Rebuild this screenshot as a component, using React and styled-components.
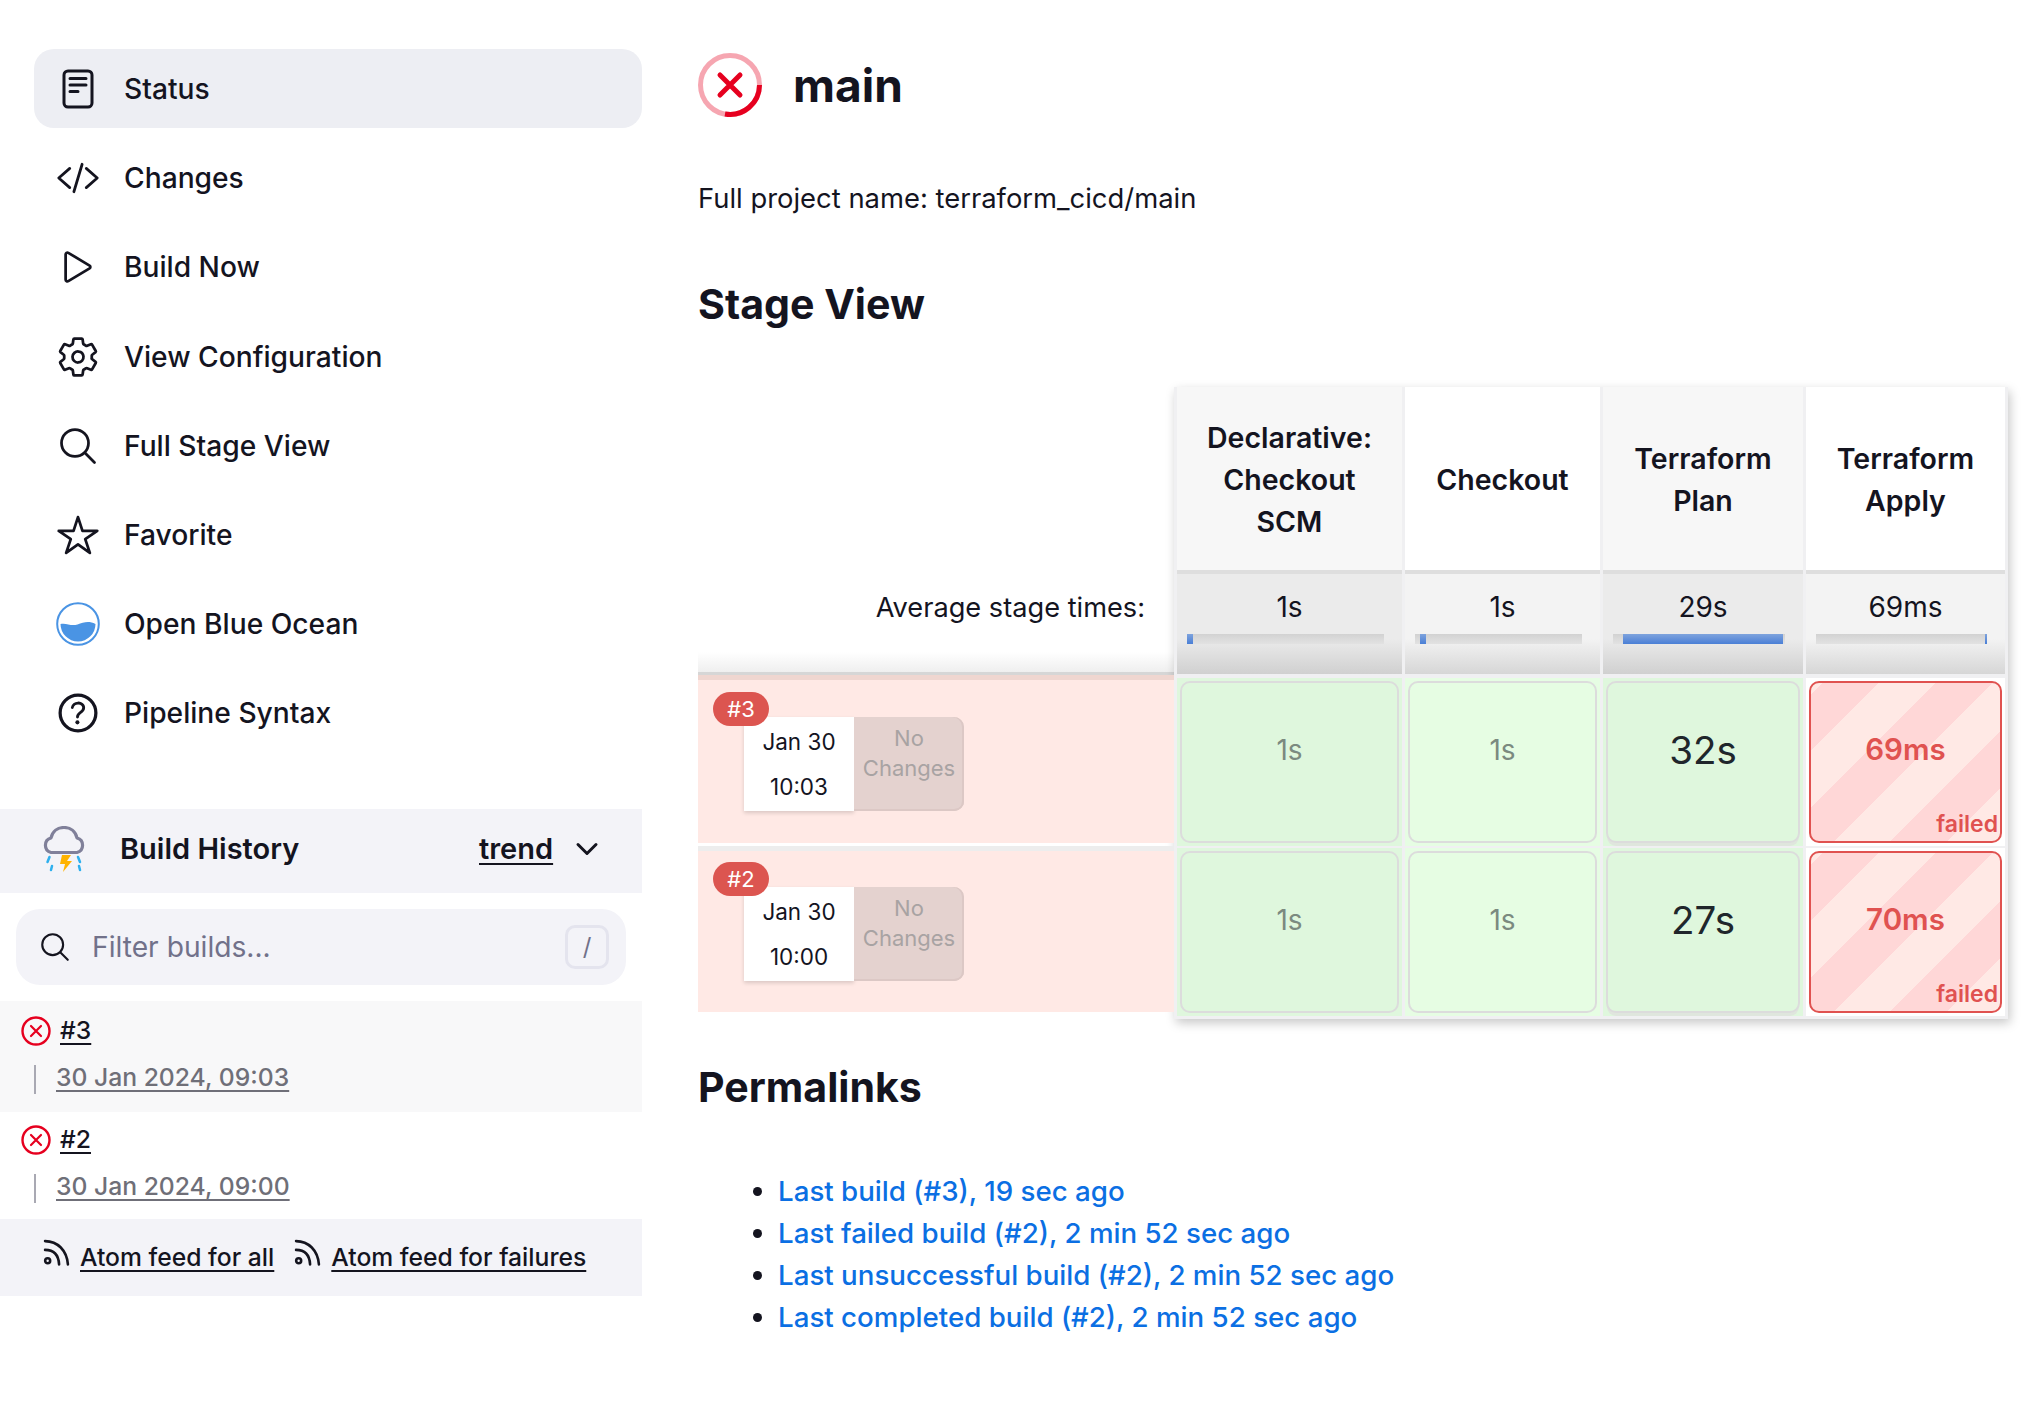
import React from 'react';
import styled, { createGlobalStyle } from 'styled-components';
import {
  IoCodeSlashOutline,
  IoPlayOutline,
  IoSettingsOutline,
  IoSearchOutline,
  IoStarOutline,
  IoHelpCircleOutline,
  IoChevronDownOutline
} from 'react-icons/io5';

const GlobalStyle = createGlobalStyle`
  html, body {
    margin: 0;
    padding: 0;
    background: #fff;
    color: #14141f;
    font-family: Inter, "Liberation Sans", sans-serif;
  }
`;

const Page = styled.div`
  display: flex;
  width: 2044px;
  height: 1407px;
  overflow: hidden;
`;

const Sidebar = styled.aside`
  width: 642px;
  flex: none;
  padding-top: 49px;
`;

const Nav = styled.nav`
  display: flex;
  flex-direction: column;
  gap: 10.2px;
  margin-left: 34px;
`;

const NavItem = styled.a`
  display: flex;
  align-items: center;
  height: 79px;
  box-sizing: border-box;
  padding-top: ${props => props.$active ? 0 : 1}px;
  border-radius: 20px;
  background: ${props => props.$active ? '#edeef3' : 'transparent'};
  font-size: 28.2px;
  font-weight: 500;
`;

const NavIcon = styled.span`
  display: flex;
  align-items: center;
  justify-content: center;
  width: 44px;
  margin: 0 24px 0 22px;
  font-size: ${props => props.$size || 44}px;

  svg {
    flex: none;
  }
`;

const HistoryHeader = styled.div`
  display: flex;
  align-items: center;
  height: 84px;
  box-sizing: border-box;
  margin-top: 56.6px;
  padding: 0 0 4px 41px;
  background: #f3f3f8;
  font-size: 29px;
  font-weight: 600;
`;

const HistoryTitle = styled.span`
  margin-left: 33px;
  width: 359px;
`;

const Underlined = styled.a`
  color: ${props => props.$color || 'inherit'};
  text-decoration: underline;
  text-decoration-thickness: 2px;
  text-underline-offset: 4px;
`;

const TrendChevron = styled.span`
  display: flex;
  margin-left: 18px;
  font-size: 32px;
`;

const FilterBox = styled.div`
  display: flex;
  align-items: center;
  height: 76px;
  margin: 16px;
  padding: 0 17px 0 22px;
  border-radius: 24px;
  background: #f3f3f8;
  font-size: 28.2px;
  color: #71718a;
`;

const FilterSearch = styled.span`
  display: flex;
  font-size: 34px;
  color: #14141f;
  margin-right: 20px;
`;

const FilterText = styled.span`
  flex: 1;
`;

const SlashKey = styled.span`
  display: flex;
  align-items: center;
  justify-content: center;
  width: 44px;
  height: 44px;
  box-sizing: border-box;
  border: 3px solid #e4e4ee;
  border-radius: 10px;
  font-size: 24px;
`;

const BuildRow = styled.div`
  height: ${props => props.$striped ? '111px' : '107px'};
  padding-top: ${props => props.$striped ? '15px' : '13px'};
  box-sizing: border-box;
  background: ${props => props.$striped ? '#f8f8f9' : '#fff'};
`;

const BuildTop = styled.div`
  display: flex;
  align-items: center;
  height: 30px;
  padding-left: 21px;
  font-size: 24.7px;
  font-weight: 500;
`;

const BuildNumber = styled.span`
  margin: 0 0 2px 9px;
`;

const BuildDate = styled.div`
  display: flex;
  align-items: center;
  margin: 19px 0 0 34px;
  height: 25px;
  border-left: 2px solid #a9a9b3;
  padding: 0 0 4px 20px;
  font-size: 24.7px;
  font-weight: 500;
`;

const FeedBar = styled.div`
  display: flex;
  align-items: flex-start;
  height: 77px;
  box-sizing: border-box;
  padding: 20px 0 0 43px;
  background: #f3f3f8;
  font-size: 24.7px;
  font-weight: 500;
`;

const FeedLink = styled.div`
  display: flex;
  margin-right: 20px;
`;

const FeedLabel = styled.span`
  margin: 3px 0 0 10px;
`;

const Main = styled.main`
  flex: 1;
  padding: 53px 0 0 56px;
`;

const TitleRow = styled.div`
  display: flex;
  align-items: center;
  height: 63px;
`;

const Title = styled.h1`
  margin: 0 0 0 31px;
  font-size: 46px;
  font-weight: 700;
`;

const ProjectName = styled.p`
  margin: 62px 0 0;
  height: 40px;
  line-height: 40px;
  font-size: 27.4px;
`;

const SectionTitle = styled.h2`
  margin: ${props => props.$top} 0 0;
  height: 54px;
  line-height: 54px;
  font-size: 41.1px;
  font-weight: 700;
`;

const StageView = styled.div`
  display: flex;
  margin-top: 56px;
`;

const RowLabels = styled.div`
  width: 476px;
  flex: none;
`;

const AverageLabel = styled.div`
  height: 288px;
  box-sizing: border-box;
  padding: 201px 29px 0 0;
  line-height: 40px;
  text-align: right;
  font-size: 27.2px;
  background: linear-gradient(#fff 265px, #efefef 285px, #d6d6d6 285px);
`;

const RunRow = styled.div`
  position: relative;
  display: flex;
  height: ${props => props.$height}px;
  box-sizing: border-box;
  padding: ${props => props.$pad}px 0 0 46px;
  margin-bottom: 3px;
  border-top: 5px solid ${props => props.$edge};
  background: #ffe9e5;
`;

const Badge = styled.span`
  position: absolute;
  top: ${props => props.$top}px;
  left: 15px;
  width: 56px;
  height: 34px;
  line-height: 34px;
  border-radius: 17px;
  background: #dc5550;
  color: #fff;
  text-align: center;
  font-size: 22px;
`;

const DateBox = styled.div`
  width: 110px;
  height: 94px;
  box-sizing: border-box;
  padding-top: 2px;
  background: #fff;
  box-shadow: 0 2px 4px rgba(0, 0, 0, 0.15);
  text-align: center;
  font-size: 22.5px;
  line-height: 45px;
`;

const NoChanges = styled.div`
  width: 110px;
  height: 94px;
  box-sizing: border-box;
  padding-top: 6px;
  border-radius: 0 10px 10px 0;
  background: #e4d2cf;
  box-shadow: inset 0 -2px 0 #dcc8c5, inset -2px 0 0 #dcc8c5;
  text-align: center;
  font-size: 22px;
  line-height: 30px;
  color: #a8a3a3;
`;

const StageGrid = styled.div`
  display: grid;
  grid-template-columns: 225px 195px 200px 199px;
  grid-template-rows: 187px 100px 172px 170px;
  column-gap: 3px;
  width: 834px;
  height: 632px;
  box-sizing: border-box;
  padding: 0 3px;
  background: #f0f0f2;
  box-shadow: 2px 4px 10px rgba(0, 0, 0, 0.22);
`;

const HeadCell = styled.div`
  display: flex;
  align-items: center;
  justify-content: center;
  box-sizing: border-box;
  padding-top: 2px;
  border-bottom: 4px solid #dedede;
  background: ${props => props.$alt ? '#f7f7f7' : '#fff'};
  text-align: center;
  font-size: 28.5px;
  font-weight: 600;
  line-height: 42px;
`;

const AverageCell = styled.div`
  padding: 13px 10px 0;
  background: ${props => props.$alt
    ? 'linear-gradient(#ebebeb 65%, #d0d0d0 100%)'
    : 'linear-gradient(#f3f3f3 65%, #d6d6d6 100%)'};
  text-align: center;
  font-size: 28px;
  line-height: 40px;
`;

const Bar = styled.div`
  position: relative;
  height: 10px;
  margin: 7px 8px 0 0;
  background: linear-gradient(#d2d2d2, #e2e2e2);
`;

const BarFill = styled.div`
  position: absolute;
  top: 0;
  bottom: 0;
  background: linear-gradient(#7ea3dd, #4a7fd6);
`;

const BodyCell = styled.div`
  margin-top: ${props => props.$gap}px;
  padding: 3px;
  background: ${props => props.$fail ? '#fff' : props.$alt ? '#dff7dd' : '#e6fde3'};
`;

const FAILED_STRIPES = 'repeating-linear-gradient(135deg, #ffe9e5 0, #ffe9e5 8px, #ffd7d7 8px, #ffd7d7 48px, #ffe9e5 48px, #ffe9e5 80px)';

const Tile = styled.div`
  position: relative;
  height: 162px;
  box-sizing: border-box;
  padding-top: ${props => props.$fail ? 46 : 47}px;
  border: 2px solid ${props => props.$fail ? '#e05250' : '#dcdcdc'};
  border-radius: 10px;
  background: ${props => props.$fail ? FAILED_STRIPES : props.$alt ? '#dff7dd' : '#e6fde3'};
  box-shadow: ${props => props.$slow ? '0 4px 0 -1px #dfe6dd' : 'none'};
  text-align: center;
  line-height: 40px;
  font-size: ${props => props.$slow ? '38.5px' : props.$fail ? '29.5px' : '28px'};
  font-weight: ${props => props.$fail ? 600 : 400};
  color: ${props => props.$fail ? '#e05250' : props.$slow ? '#20262b' : '#7b8a80'};
`;

const FailedTag = styled.span`
  position: absolute;
  right: 2px;
  bottom: 4px;
  line-height: 26px;
  font-size: 23px;
  font-weight: 600;
`;

const LinkList = styled.ul`
  margin: 56px 0 0;
  padding: 0 0 0 80px;
  font-size: 27.7px;
  font-weight: 500;
  line-height: 42px;
  color: #14141f;
`;

const PermaLink = styled.a`
  color: #0b6fe3;
`;

const FailIcon = ({ size = 30 }) => (
  <svg width={size} height={size} viewBox="0 0 30 30" fill="none" stroke="#e6001f" strokeLinecap="round">
    <circle cx="15" cy="15" r="13.5" strokeWidth="2.4" />
    <path d="M10 10l10 10M20 10l-10 10" strokeWidth="2.2" />
  </svg>
);

const FailBigIcon = () => (
  <svg width="64" height="64" viewBox="0 0 64 64" fill="none" stroke="#e6001f">
    <circle cx="32" cy="32" r="29.5" strokeWidth="5" opacity="0.35" />
    <path d="M61.5 32A29.5 29.5 0 0 1 27 61" strokeWidth="5" />
    <path d="M22 22l20 20M42 22L22 42" strokeWidth="5" strokeLinecap="round" />
  </svg>
);

const StatusIcon = () => (
  <svg width="32" height="40" viewBox="0 0 32 40" fill="none" stroke="#14141f" strokeWidth="3" strokeLinecap="round">
    <rect x="2" y="2" width="28" height="36" rx="4" />
    <path d="M8 9.5h16M8 16h16M8 22.5h8" />
  </svg>
);

const OceanIcon = () => (
  <svg width="44" height="44" viewBox="0 0 44 44">
    <circle cx="22" cy="22" r="20.8" fill="none" stroke="#4a94e4" strokeWidth="2" />
    <path d="M4.5 22c6-1.500 10 2.500 17 .5 6-2 11-4 18-.5a17.500 17.500 0 0 1-35 0z" fill="#4a94e4" />
  </svg>
);

const WeatherIcon = () => (
  <svg width="46" height="46" viewBox="0 0 46 46" fill="none">
    <path d="M10 26.500a7.500 7.500 0 0 1 0-14.500C11.500 5.500 16.500 1.500 23 1.500s11.500 4 13 10.500a7.500 7.500 0 0 1 0 14.500z" stroke="#80809a" strokeWidth="3.200" strokeLinejoin="round" />
    <path d="M21 29h9l-4 6h5l-9 11 2-8h-5z" fill="#ffb300" />
    <path d="M8.500 31l-2 5M11 40l-1 4M37 31l2 5M38 40l1 4" stroke="#2fb0ee" strokeWidth="2.500" strokeLinecap="round" />
  </svg>
);

const RssIcon = () => (
  <svg width="27" height="27" viewBox="0 0 26 26" fill="none" stroke="#14141f" strokeWidth="2.500" strokeLinecap="round">
    <circle cx="4.500" cy="21" r="2.400" />
    <path d="M2 10.500C11 10.500 15 16 15.500 24.500M2 2c12 0 21 9 22 22.500" />
  </svg>
);

const navItems = [
  { label: 'Status', icon: <StatusIcon />, active: true },
  { label: 'Changes', icon: <IoCodeSlashOutline /> },
  { label: 'Build Now', icon: <IoPlayOutline /> },
  { label: 'View Configuration', icon: <IoSettingsOutline /> },
  { label: 'Full Stage View', icon: <IoSearchOutline /> },
  { label: 'Favorite', icon: <IoStarOutline /> },
  { label: 'Open Blue Ocean', icon: <OceanIcon /> },
  { label: 'Pipeline Syntax', icon: <IoHelpCircleOutline />, size: 52 }
];

const builds = [
  { id: '#3', date: '30 Jan 2024, 09:03' },
  { id: '#2', date: '30 Jan 2024, 09:00' }
];

const stages = [
  { name: ['Declarative:', 'Checkout', 'SCM'], avg: '1s', fill: { left: 0, width: 6 } },
  { name: ['Checkout'], avg: '1s', fill: { left: 5, width: 6 } },
  { name: ['Terraform', 'Plan'], avg: '29s', fill: { left: 10, width: 160 } },
  { name: ['Terraform', 'Apply'], avg: '69ms', fill: { right: 0, width: 2 } }
];

const runs = [
  {
    id: '#3', day: 'Jan 30', time: '10:03', height: 168, pad: 37, edge: '#efd6d0', badge: 12,
    cells: ['1s', '1s', '32s', '69ms']
  },
  {
    id: '#2', day: 'Jan 30', time: '10:00', height: 166, pad: 36, edge: '#ededed', badge: 11,
    cells: ['1s', '1s', '27s', '70ms']
  }
];

const permalinks = [
  'Last build (#3), 19 sec ago',
  'Last failed build (#2), 2 min 52 sec ago',
  'Last unsuccessful build (#2), 2 min 52 sec ago',
  'Last completed build (#2), 2 min 52 sec ago'
];

const renderStageCell = (value, index, rowIndex) => {
  const fail = index === 3;
  const slow = index === 2;
  const alt = index % 2 === 0;
  return (
    <BodyCell key={`${rowIndex}-${index}`} $gap={rowIndex === 0 ? 4 : 2} $alt={alt} $fail={fail}>
      <Tile $alt={alt} $fail={fail} $slow={slow}>
        {value}
        {fail && <FailedTag>failed</FailedTag>}
      </Tile>
    </BodyCell>
  );
};

export default function App() {
  return (
    <Page>
      <GlobalStyle />
      <Sidebar>
        <Nav>
          {navItems.map(item => (
            <NavItem key={item.label} $active={item.active}>
              <NavIcon $size={item.size}>{item.icon}</NavIcon>
              {item.label}
            </NavItem>
          ))}
        </Nav>
        <HistoryHeader>
          <WeatherIcon />
          <HistoryTitle>Build History</HistoryTitle>
          <Underlined>trend</Underlined>
          <TrendChevron><IoChevronDownOutline /></TrendChevron>
        </HistoryHeader>
        <FilterBox>
          <FilterSearch><IoSearchOutline /></FilterSearch>
          <FilterText>Filter builds...</FilterText>
          <SlashKey>/</SlashKey>
        </FilterBox>
        {builds.map((build, index) => (
          <BuildRow key={build.id} $striped={index === 0}>
            <BuildTop>
              <FailIcon />
              <BuildNumber><Underlined>{build.id}</Underlined></BuildNumber>
            </BuildTop>
            <BuildDate><Underlined $color="#6f6f78">{build.date}</Underlined></BuildDate>
          </BuildRow>
        ))}
        <FeedBar>
          <FeedLink><RssIcon /><FeedLabel><Underlined>Atom feed for all</Underlined></FeedLabel></FeedLink>
          <FeedLink><RssIcon /><FeedLabel><Underlined>Atom feed for failures</Underlined></FeedLabel></FeedLink>
        </FeedBar>
      </Sidebar>
      <Main>
        <TitleRow>
          <FailBigIcon />
          <Title>main</Title>
        </TitleRow>
        <ProjectName>Full project name: terraform_cicd/main</ProjectName>
        <SectionTitle $top="59px">Stage View</SectionTitle>
        <StageView>
          <RowLabels>
            <AverageLabel>Average stage times:</AverageLabel>
            {runs.map(run => (
              <RunRow key={run.id} $height={run.height} $pad={run.pad} $edge={run.edge}>
                <Badge $top={run.badge}>{run.id}</Badge>
                <DateBox>{run.day}<br />{run.time}</DateBox>
                <NoChanges>No<br />Changes</NoChanges>
              </RunRow>
            ))}
          </RowLabels>
          <StageGrid>
            {stages.map((stage, index) => (
              <HeadCell key={index} $alt={index % 2 === 0}>
                <div>{stage.name.map(line => <div key={line}>{line}</div>)}</div>
              </HeadCell>
            ))}
            {stages.map((stage, index) => (
              <AverageCell key={index} $alt={index % 2 === 0}>
                {stage.avg}
                <Bar>
                  <BarFill style={stage.fill} />
                </Bar>
              </AverageCell>
            ))}
            {runs.map((run, rowIndex) => run.cells.map((value, index) => renderStageCell(value, index, rowIndex)))}
          </StageGrid>
        </StageView>
        <SectionTitle $top="41px">Permalinks</SectionTitle>
        <LinkList>
          {permalinks.map(link => (
            <li key={link}><PermaLink>{link}</PermaLink></li>
          ))}
        </LinkList>
      </Main>
    </Page>
  );
}
